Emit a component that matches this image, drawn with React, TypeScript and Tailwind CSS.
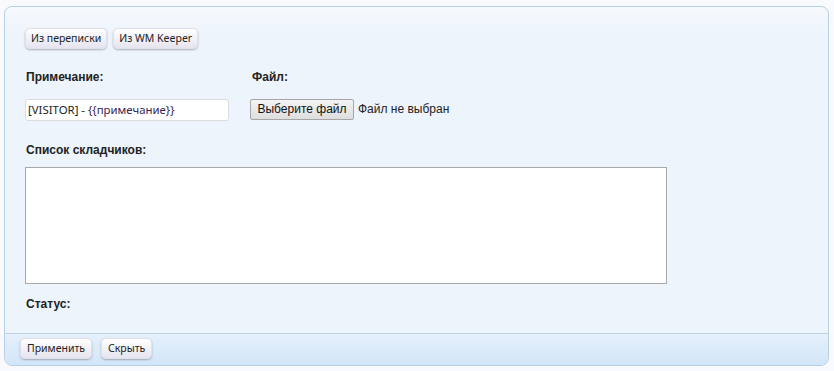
import React from "react";

function SoftButton({ children, px = "px-[5px]" }: { children: React.ReactNode; px?: string }) {
  return (
    <button className={`h-[21px] ${px} rounded-[5px] bg-gradient-to-b from-[#ffffff] to-[#e6e4ef] border border-[#e2e0ea] shadow-[0_1px_2px_rgba(0,0,0,0.28)] text-[10.5px] leading-[19px] text-[#222] font-['Noto_Sans',sans-serif]`}>
      {children}
    </button>
  );
}

export default function App() {
  return (
    <div className="w-[834px] h-[371px] bg-[#f8fafd] pt-[6px] pl-[4px] font-['Liberation_Sans',Arial,sans-serif]">
      <div className="w-[825px] h-[360px] border border-[#b9cfe4] rounded-[8px] flex flex-col overflow-hidden bg-gradient-to-b from-[#f6f9fd] via-[#edf4fc] via-[8%] to-[#edf4fc]">
        <div className="flex-1 pl-[20px] pt-[21px]">
          <div className="flex gap-[6px]">
            <SoftButton>Из переписки</SoftButton>
            <SoftButton>Из WM Keeper</SoftButton>
          </div>
          <div className="mt-[21px] grid grid-cols-[225px_1fr]">
            <div className="text-[12px] leading-[14px] font-bold text-[#222] pl-[1px]">Примечание:</div>
            <div className="text-[12px] leading-[14px] font-bold text-[#222] pl-[2px]">Файл:</div>
            <div className="mt-[15px]">
              <div className="w-[204px] h-[22px] bg-white border border-[#dcdcdc] rounded-[3px] pl-[2px] text-[11.4px] leading-[20px] text-[#222] font-['Noto_Sans',sans-serif] whitespace-nowrap overflow-hidden">
                [VISITOR] - <span className="text-[#3a1f4f]">{"{{примечание}}"}</span>
              </div>
            </div>
            <div className="mt-[15px] flex items-center h-[20px]">
              <div className="h-[21px] w-[104px] border border-[#a6a6a6] rounded-[2px] bg-gradient-to-b from-[#f3f3f3] to-[#dedede] text-[12px] leading-[19px] text-[#111] text-center">
                Выберите файл
              </div>
              <span className="ml-[4px] text-[12px] text-[#222]">Файл не выбран</span>
            </div>
          </div>
          <div className="mt-[22px] text-[12px] leading-[14px] font-bold text-[#222] pl-[1px]">Список складчиков:</div>
          <div className="mt-[10px] w-[642px] h-[117px] bg-white border border-[#a9a9a9]"></div>
          <div className="mt-[13px] text-[12px] leading-[14px] font-bold text-[#222] pl-[1px]">Статус:</div>
        </div>
        <div className="h-[32px] border-t border-[#bcd3e8] bg-gradient-to-b from-[#e5f0fb] to-[#d2e6f8] pl-[15px] pt-[4px] flex gap-[9px]">
          <SoftButton px="px-[6px]">Применить</SoftButton>
          <SoftButton px="px-[6px]">Скрыть</SoftButton>
        </div>
      </div>
    </div>
  );
}
